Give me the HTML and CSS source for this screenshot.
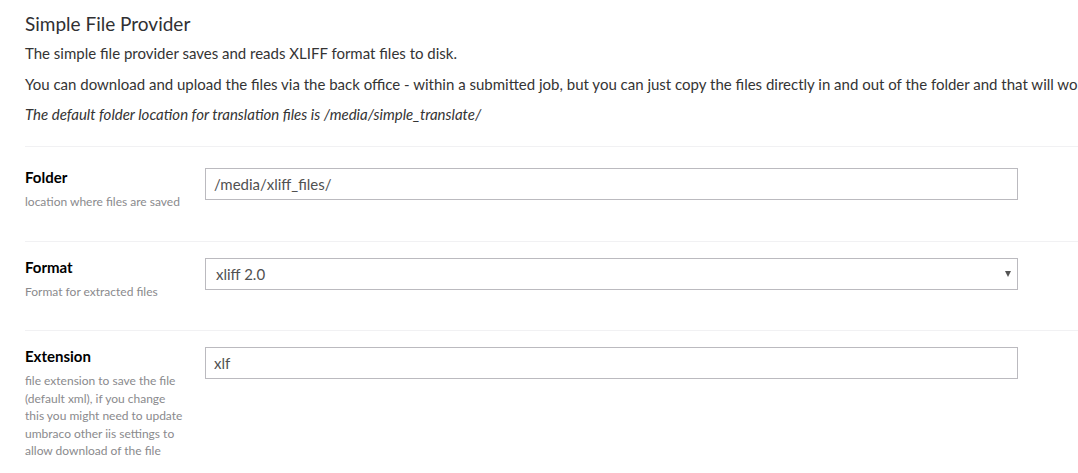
FILE: index.html
```html
<!DOCTYPE html>
<html>
<head>
<meta charset="utf-8">
<link rel="stylesheet" href="styles.css">
</head>
<body>
<div class="page">
  <div class="intro">
    <h3 class="title">Simple File Provider</h3>
    <p class="p1">The simple file provider saves and reads XLIFF format files to disk.</p>
    <p class="nowrap">You can download and upload the files via the back office - within a submitted job, but you can just copy the files directly in and out of the folder and that will work too.</p>
    <p><em>The default folder location for translation files is /media/simple_translate/</em></p>
  </div>

  <div class="row first">
    <div class="label">
      <div class="name">Folder</div>
      <div class="desc">location where files are saved</div>
    </div>
    <div class="control">
      <input class="field" type="text" value="/media/xliff_files/">
    </div>
  </div>

  <div class="row">
    <div class="label">
      <div class="name">Format</div>
      <div class="desc">Format for extracted files</div>
    </div>
    <div class="control">
      <div class="field select">
        <span>xliff 2.0</span>
        <span class="arrow"></span>
      </div>
    </div>
  </div>

  <div class="row">
    <div class="label">
      <div class="name">Extension</div>
      <div class="desc">file extension to save the file (default xml), if you change this you might need to update umbraco other iis settings to allow download of the file</div>
    </div>
    <div class="control">
      <input class="field" type="text" value="xlf">
    </div>
  </div>
</div>
</body>
</html>
```

FILE: styles.css
```css
html, body {
  margin: 0;
  padding: 0;
  background: #fff;
  overflow: hidden;
}
body {
  font-family: Lato, "Open Sans", sans-serif;
  font-size: 15px;
  color: #343434;
}
.page {
  padding: 0 0 0 25px;
  width: 1100px;
}
.intro {
  padding-bottom: 12px;
  border-bottom: 1px solid #f1f1f3;
}
.title {
  font-size: 19px;
  font-weight: 400;
  line-height: 20px;
  margin: 14px 0 9px;
  color: #303033;
}
.intro p {
  margin: 0 0 10px;
  line-height: 20px;
}
.intro p.p1 {
  margin-bottom: 11px;
}
.nowrap {
  white-space: nowrap;
}
.row {
  display: flex;
  padding: 16px 0 30px;
  border-bottom: 1px solid #f1f1f3;
}
.row.first {
  padding-top: 21px;
}
.label {
  width: 160px;
  padding-right: 20px;
  flex-shrink: 0;
}
.name {
  font-weight: 700;
  font-size: 15px;
  line-height: 19px;
  color: #000;
}
.desc {
  margin-top: 6px;
  font-size: 12px;
  line-height: 17.5px;
  color: #8a8a8d;
}
.control {
  flex: none;
}
.field {
  box-sizing: border-box;
  width: 813px;
  height: 32px;
  margin: 0;
  padding: 0 8px;
  border: 1px solid #bbbabf;
  border-radius: 0;
  font-family: Lato, "Open Sans", sans-serif;
  font-size: 15px;
  color: #515151;
  background: #fff;
  outline: none;
}
.select {
  display: flex;
  align-items: center;
  justify-content: space-between;
  padding: 0 6px 0 10px;
}
.arrow {
  width: 0;
  height: 0;
  border-left: 3.5px solid transparent;
  border-right: 3.5px solid transparent;
  border-top: 6px solid #555;
}
```
